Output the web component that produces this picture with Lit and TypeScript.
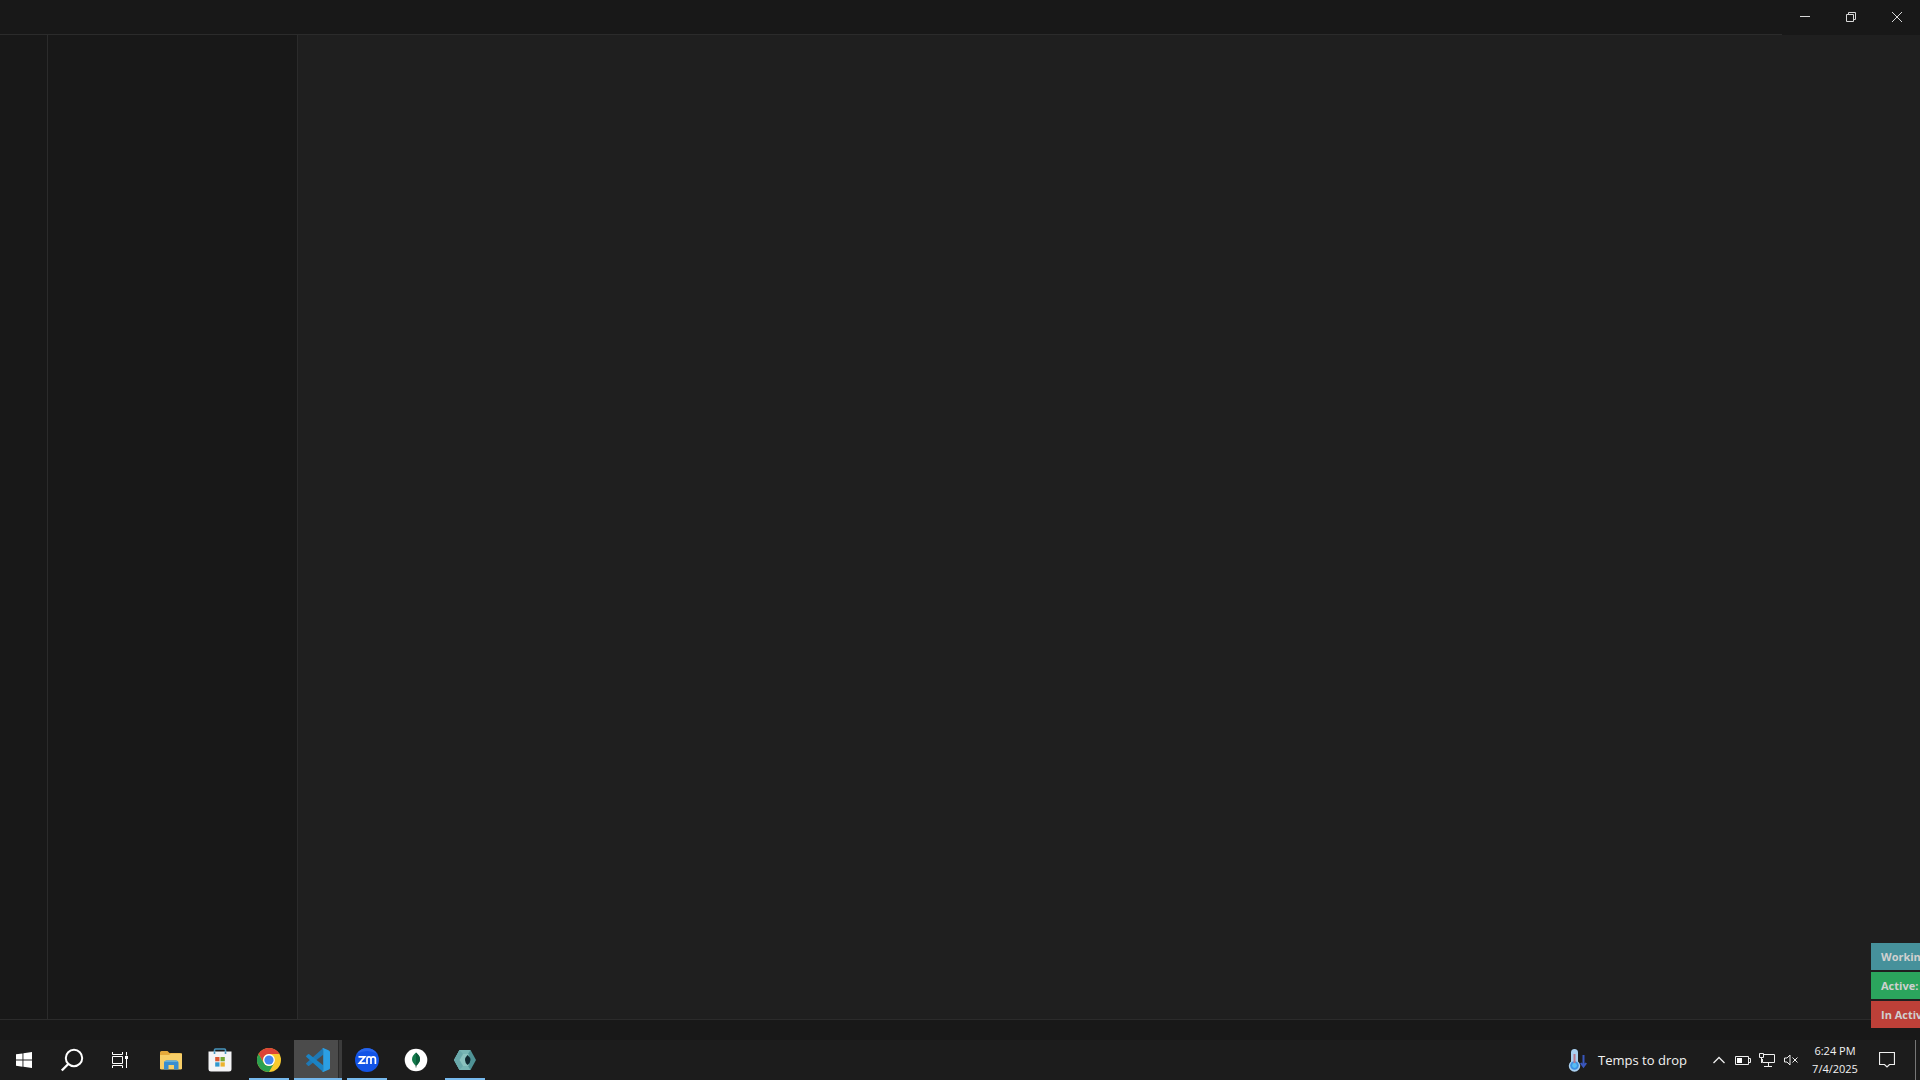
import { LitElement, html, css, svg } from "lit";
import { customElement } from "lit/decorators.js";

const icon = (w: number, h: number, body: unknown) =>
  html`<svg width=${w} height=${h} viewBox="0 0 ${w} ${h}" aria-hidden="true">${body}</svg>`;

const glyphs = {
  minimize: icon(12, 12, svg`<path d="M1 5.500h10" stroke="#d8d8d8" fill="none"/>`),
  restore: icon(12, 12, svg`<path d="M1.500 3.500h7v7h-7zM3.500 3.500v-2h7v7h-2" stroke="#d8d8d8" fill="none"/>`),
  close: icon(12, 12, svg`<path d="M1 1l10 10M11 1L1 11" stroke="#d8d8d8" fill="none"/>`),
  start: icon(16, 16, svg`<path d="M0 2.300L6.500 1.400V7.600H0zM7.400 1.300L16 0v7.600H7.400zM0 8.500h6.500v6.200L0 13.800zM7.400 8.500H16V16L7.400 14.800z" fill="#fff"/>`),
  search: icon(24, 24, svg`<circle cx="14" cy="10" r="8.200" stroke="#fff" stroke-width="2" fill="none"/><path d="M8.300 16L1.800 22.500" stroke="#fff" stroke-width="2.400" fill="none"/>`),
  taskview: icon(16, 16, svg`<path d="M.5 0v2.500h10V0M.5 16v-2.500h10V16M.5 4.500h10v7H.500zM14.500 0v3.500M14.500 7v9" stroke="#fff" fill="none"/><path d="M13 4h3v3h-3z" fill="#fff"/>`),
  explorer: icon(24, 24, svg`<path d="M1 4.500q0-1.500 1.500-1.500h6l2 2H21q2 0 2 2v14H1z" fill="#e5a93b"/><path d="M1 7h9l2-1.500h11V20q0 1.500-1.500 1.500h-19Q1 21.500 1 20z" fill="#f8cf68"/><path d="M5 21.500V15q0-2.500 2.500-2.500h9.500q2.500 0 2.500 2.500v6.500h-4.500V17h-5.500v4.500z" fill="#398ed0"/><path d="M5.500 14q.5-1.500 2-1.500H17q1.500 0 2 1.500z" fill="#62afdb"/>`),
  store: icon(24, 24, svg`<path d="M6.500 5V2q0-1 1-1h9q1 0 1 1v3" stroke="#4795bd" stroke-width="1.600" fill="none"/><path d="M.5 3.500h23v17.500q0 2.500-2.500 2.500H3Q.5 23.500.5 21z" fill="#f4f4f6"/><path d="M6.500 3.500v2.500M17.500 3.500v2.500" stroke="#4795bd" stroke-width="1.600" fill="none"/><path d="M7.200 9h4.300v4.300H7.200z" fill="#dc5732"/><path d="M12.500 9h4.300v4.300h-4.300z" fill="#76a731"/><path d="M7.200 14.300h4.300v4.300H7.200z" fill="#3198cf"/><path d="M12.500 14.300h4.300v4.300h-4.300z" fill="#edb32d"/>`),
  chrome: icon(24, 24, svg`<circle cx="12" cy="12" r="12" fill="#f9cb2e"/><path d="M1.600 6A12 12 0 0 1 22.400 6H12a6 6 0 0 0-5.200 9z" fill="#dc4437"/><path d="M1.600 6A12 12 0 0 0 12 24l5.200-9a6 6 0 0 1-10.400 0z" fill="#2ca150"/><circle cx="12" cy="12" r="5.900" fill="#fff"/><circle cx="12" cy="12" r="4.600" fill="#4387ee"/>`),
  code: icon(24, 24, svg`<path d="M17.200 0v6.800L3.200 17.700q-.6.500-1.200 0L.4 16.300q-.7-.6 0-1.200z" fill="#1f78b4"/><path d="M17.200 24v-6.800L3.200 6.300q-.6-.5-1.200 0L.4 7.700q-.7.600 0 1.200z" fill="#1b83c4"/><path d="M17.200 0L23 2.500q1 .5 1 1.500v16q0 1-1 1.500L17.200 24q-.8-.3-1-.8 1 .1 1-1V1.800q0-1.100-1-1z" fill="#2b9fe4"/>`),
  zoom: icon(24, 24, svg`<circle cx="12" cy="12" r="12" fill="#1254e6"/><path d="M2 5.500a12 12 0 0 1 20 0q-10-5-20 0z" fill="#2866ec"/><path d="M3.500 8.800h6.300L4.300 15.200h6.200M12 16V11q0-2.200 2-2.200t2 2.200v5M16 16V11q0-2.200 2.200-2.200t2.200 2.200v5" stroke="#fff" stroke-width="1.700" fill="none"/>`),
  leaf: icon(24, 24, svg`<circle cx="12" cy="12" r="11.300" fill="#fff"/><path d="M12 4.500q8 6.700 0 13.500Q4 11.200 12 4.500z" fill="#13794a"/><path d="M12 4.500q8 6.700 0 13.500z" fill="#0b5c3b"/><path d="M12 17v2.500" stroke="#54746a" fill="none"/>`),
  compass: icon(24, 24, svg`<path d="M6.500 2h11L23 12l-5.500 10h-11L1 12z" fill="#4f9295"/><path d="M6.500 2H17.500L15 6H10L6.500 12 10 18H15l2.500 4h-11L1 12z" fill="#77b5b4"/><path d="M1 12l5.500-10L10 6 6.500 12 10 18l-3.500 4z" fill="#69a8aa"/><path d="M10 6h5.500v12H10l-3.500-6z" fill="#8ac2bf"/><path d="M14.500 7q6 5 0 10-5-5 0-10z" fill="#10272f"/>`),
  weather: icon(20, 24, svg`<path d="M3 4.500a3.500 3.500 0 0 1 7 0v9a5.700 5.700 0 1 1-7 0z" fill="#a9cfef"/><circle cx="6.500" cy="17.500" r="4.300" fill="#3c91e5"/><path d="M6.500 17V6" stroke="#b9788c" stroke-width="2" fill="none"/><circle cx="6.500" cy="17.500" r="2.400" fill="#58bdf4"/><path d="M15.500 7v11M12.800 15l2.700 3.500 2.700-3.500" stroke="#3956bc" stroke-width="2" fill="none"/>`),
  chevron: icon(12, 12, svg`<path d="M.5 9L6 3.500 11.500 9" stroke="#eee" stroke-width="1.300" fill="none"/>`),
  battery: icon(16, 12, svg`<path d="M.5 2.500h13v8H.500zM14 4.500h1.500v4H14" stroke="#eee" fill="none"/><path d="M2 4h5v5H2z" fill="#fff"/>`),
  network: icon(16, 14, svg`<path d="M5 1.500h10.500v8h-12V6M9.500 10v3M5 13.500h8M.5.500h4v4h-4zM2.500 5v5" stroke="#eee" fill="none"/>`),
  volume: icon(16, 14, svg`<path d="M1.500 5v4h2.500l3 3v-10L4 5zM9.500 4.500l5 5M14.500 4.500l-5 5" stroke="#eee" fill="none"/>`),
  notice: icon(16, 16, svg`<path d="M.5.500h15v12H10.500L8 15l-2.500-2.500H.500z" stroke="#eee" stroke-width="1.200" fill="none"/>`),
};

type App = { name: string; glyph: unknown; state: string };

@customElement("app-root")
export class AppRoot extends LitElement {
  static styles = css`
    :host {
      display: flex;
      flex-direction: column;
      position: relative;
      height: 100vh;
      overflow: hidden;
      background: #181818;
      color: #f2f2f2;
      font: 11px/18px "Open Sans", "Noto Sans", sans-serif;
    }
    * { box-sizing: border-box; }
    svg { display: block; }
    button {
      display: flex;
      align-items: center;
      justify-content: center;
      padding: 0;
      border: 0;
      background: none;
      color: inherit;
      font: inherit;
    }
    .title { display: flex; flex: none; height: 35px; }
    .drag { flex: 1; border-bottom: 1px solid #2b2b2b; }
    .controls { display: flex; height: 34px; }
    .controls button { width: 46px; }
    .workspace { display: flex; flex: 1; min-height: 0; }
    .activity { width: 48px; border-right: 1px solid #2b2b2b; }
    .side { width: 250px; border-right: 1px solid #2b2b2b; }
    .editor { flex: 1; background: #1f1f1f; }
    .status { flex: none; height: 21px; border-top: 1px solid #2b2b2b; }
    .taskbar { display: flex; flex: none; height: 40px; background: #1c1c1c; }
    .system { display: flex; padding-right: 2px; }
    .system button { width: 48px; }
    .apps { display: flex; flex: 1; }
    .apps button { width: 49px; }
    .apps .open { position: relative; }
    .apps .open::after {
      content: "";
      position: absolute;
      inset: auto 4px 0 5px;
      height: 2px;
      background: #76b9ed;
    }
    .apps .active { background: linear-gradient(to right, transparent 1px, #4b4b4b 1px, #4b4b4b 45px, #292929 45px, #292929 46px, #3b3b3b 46px); }
    .apps .active::after { inset: auto 0 0 1px; }
    .tray { display: flex; align-items: stretch; }
    .tray .weather { gap: 10px; padding-right: 20px; font-size: 13px; }
    .tray .small { width: 24px; }
    .tray .chevron { width: 24px; }
    .tray .clock { width: 64px; text-align: center; }
    .tray .notice { width: 40px; }
    .tray .desktop { width: 5px; margin-left: 8px; border-left: 1px solid #777; }
    .timers {
      position: absolute;
      right: 0;
      bottom: 52px;
      display: grid;
      gap: 2px;
      width: 49px;
      overflow: hidden;
      color: #d0d0d0;
      font-weight: 700;
      white-space: nowrap;
    }
    .timer { height: 27px; padding-left: 10px; line-height: 27px; }
    .working { background: #46919b; }
    .on { background: #2ba55d; }
    .off { background: #bd4038; }
  `;

  private apps: App[] = [
    { name: "File Explorer", glyph: glyphs.explorer, state: "" },
    { name: "Microsoft Store", glyph: glyphs.store, state: "" },
    { name: "Google Chrome", glyph: glyphs.chrome, state: "open" },
    { name: "Visual Studio Code", glyph: glyphs.code, state: "open active" },
    { name: "Zoom", glyph: glyphs.zoom, state: "open" },
    { name: "MongoDB", glyph: glyphs.leaf, state: "" },
    { name: "MongoDB Compass", glyph: glyphs.compass, state: "open" },
  ];

  render() {
    return html`
      <header class="title">
        <div class="drag"></div>
        <div class="controls">
          <button aria-label="Minimize">${glyphs.minimize}</button>
          <button aria-label="Restore">${glyphs.restore}</button>
          <button aria-label="Close">${glyphs.close}</button>
        </div>
      </header>
      <div class="workspace">
        <nav class="activity"></nav>
        <aside class="side"></aside>
        <main class="editor"></main>
      </div>
      <div class="status"></div>
      <footer class="taskbar">
        <div class="system">
          <button aria-label="Start">${glyphs.start}</button>
          <button aria-label="Search">${glyphs.search}</button>
          <button aria-label="Task View">${glyphs.taskview}</button>
        </div>
        <div class="apps">
          ${this.apps.map((a) => html`<button class=${a.state} aria-label=${a.name}>${a.glyph}</button>`)}
        </div>
        <div class="tray">
          <button class="weather">${glyphs.weather}<span>Temps to drop</span></button>
          <button class="chevron" aria-label="Show hidden icons">${glyphs.chevron}</button>
          <button class="small" aria-label="Battery">${glyphs.battery}</button>
          <button class="small" aria-label="Network">${glyphs.network}</button>
          <button class="small" aria-label="Volume muted">${glyphs.volume}</button>
          <button class="clock"><span>6:24 PM<br />7/4/2025</span></button>
          <button class="notice" aria-label="Notifications">${glyphs.notice}</button>
          <button class="desktop" aria-label="Show desktop"></button>
        </div>
      </footer>
      <div class="timers">
        <div class="timer working">Working</div>
        <div class="timer on">Active:</div>
        <div class="timer off">In Active</div>
      </div>
    `;
  }
}
